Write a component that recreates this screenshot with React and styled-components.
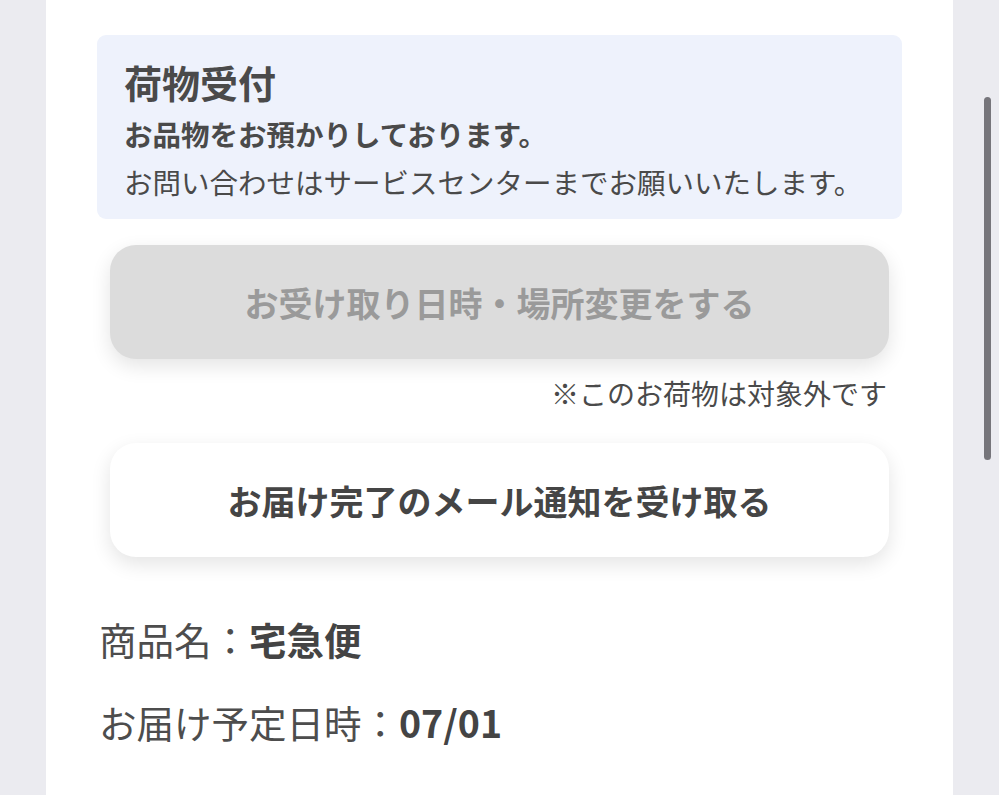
import React from "react";
import styled, { createGlobalStyle } from "styled-components";

const Global = createGlobalStyle`
  html, body { margin: 0; padding: 0; }
  body {
    background: #ebebf0;
    font-family: "Noto Sans CJK JP", "Noto Sans", sans-serif;
    color: #4a4a4a;
  }
`;

const Page = styled.div`
  position: relative;
  width: 999px;
  height: 795px;
  overflow: hidden;
  display: flex;
  background: #ebebf0;
`;

const Panel = styled.main`
  margin-left: 46px;
  width: 907px;
  box-sizing: border-box;
  background: #ffffff;
  padding: 35px 51px 0;
  display: flex;
  flex-direction: column;
`;

const InfoBox = styled.section`
  height: 184px;
  box-sizing: border-box;
  background: #eef2fc;
  border-radius: 9px;
  padding: 22px 27px 0;
  display: flex;
  flex-direction: column;
`;

const Title = styled.h2`
  margin: 0;
  font-size: 38px;
  line-height: 50px;
  font-weight: 700;
  color: #4a4a4a;
`;

const InfoLine = styled.p`
  margin: ${(p) => (p.$first ? "3px" : "0")} 0 0;
  font-size: 28.5px;
  line-height: 48px;
  font-weight: ${(p) => (p.$bold ? 700 : 400)};
  color: #4a4a4a;
  white-space: nowrap;
`;

const ActionButton = styled.button`
  margin: ${(p) => p.$mt}px 13px 0;
  height: 114px;
  border: none;
  border-radius: 26px;
  background: ${(p) => (p.disabled ? "#dcdcdc" : "#ffffff")};
  color: ${(p) => (p.disabled ? "#9a9a9a" : "#454545")};
  box-shadow: 0 7px 20px rgba(0, 0, 0, 0.11);
  font-family: inherit;
  font-size: 34px;
  font-weight: 700;
  display: flex;
  align-items: center;
  justify-content: center;
  padding: 0;
  cursor: ${(p) => (p.disabled ? "default" : "pointer")};
`;

const Note = styled.p`
  margin: 14px 15px 0 0;
  text-align: right;
  font-size: 28px;
  line-height: 40px;
  color: #4a4a4a;
`;

const DetailRow = styled.p`
  margin: ${(p) => p.$mt}px 0 0 2px;
  font-size: 37.5px;
  line-height: 50px;
  color: #4d4d4d;
  white-space: nowrap;
`;

const Value = styled.strong`
  font-weight: 700;
  color: #444444;
`;

const ScrollThumb = styled.div`
  position: absolute;
  right: 8px;
  top: 97px;
  width: 7px;
  height: 363px;
  border-radius: 4px;
  background: #76757b;
`;

export default function App() {
  return (
    <>
      <Global />
      <Page>
        <Panel>
          <InfoBox>
            <Title>荷物受付</Title>
            <InfoLine $bold $first>
              お品物をお預かりしております。
            </InfoLine>
            <InfoLine>お問い合わせはサービスセンターまでお願いいたします。</InfoLine>
          </InfoBox>
          <ActionButton $mt={26} disabled>
            お受け取り日時・場所変更をする
          </ActionButton>
          <Note>※このお荷物は対象外です</Note>
          <ActionButton $mt={30}>お届け完了のメール通知を受け取る</ActionButton>
          <DetailRow $mt={57}>
            商品名：<Value>宅急便</Value>
          </DetailRow>
          <DetailRow $mt={33}>
            お届け予定日時：<Value>07/01</Value>
          </DetailRow>
        </Panel>
        <ScrollThumb />
      </Page>
    </>
  );
}
